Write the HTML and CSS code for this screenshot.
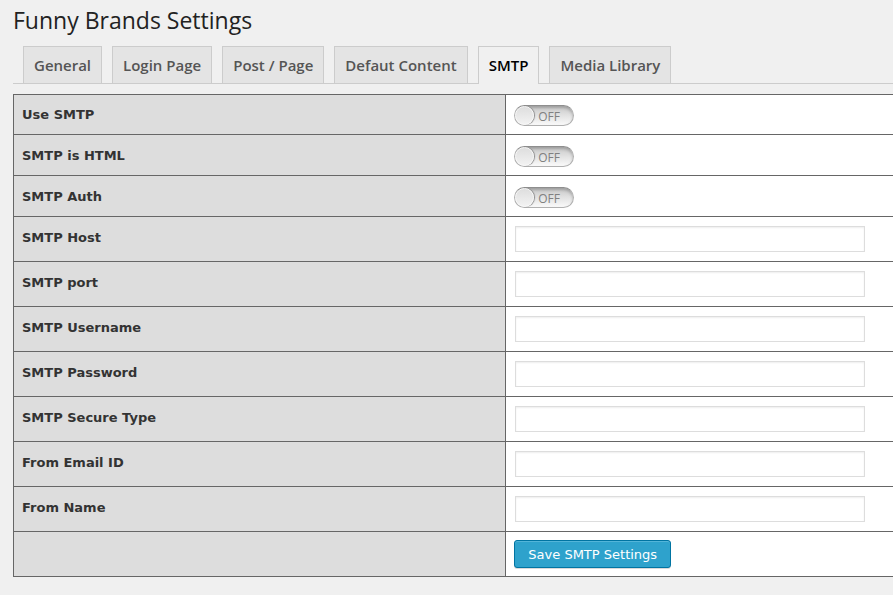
FILE: index.html
```html
<!DOCTYPE html>
<html lang="en">
<head>
<meta charset="utf-8">
<meta name="viewport" content="width=device-width, initial-scale=1">
<title>Funny Brands Settings</title>
<link rel="stylesheet" href="styles.css">
</head>
<body>
<main class="wrap">
  <h1 class="title">Funny Brands Settings</h1>
  <nav class="tabs">
    <a class="tab" href="#general">General</a>
    <a class="tab" href="#login">Login Page</a>
    <a class="tab" href="#post">Post / Page</a>
    <a class="tab" href="#content">Defaut Content</a>
    <a class="tab tab-active" href="#smtp" aria-current="page">SMTP</a>
    <a class="tab" href="#media">Media Library</a>
  </nav>
  <form class="settings">
    <table class="form-table">
      <tbody>
        <tr class="switch-row">
          <th scope="row"><label for="use-smtp">Use SMTP</label></th>
          <td><span class="switch"><input type="checkbox" id="use-smtp"><span class="switch-text">OFF</span></span></td>
        </tr>
        <tr class="switch-row">
          <th scope="row"><label for="is-html">SMTP is HTML</label></th>
          <td><span class="switch"><input type="checkbox" id="is-html"><span class="switch-text">OFF</span></span></td>
        </tr>
        <tr class="switch-row">
          <th scope="row"><label for="auth">SMTP Auth</label></th>
          <td><span class="switch"><input type="checkbox" id="auth"><span class="switch-text">OFF</span></span></td>
        </tr>
        <tr>
          <th scope="row"><label for="host">SMTP Host</label></th>
          <td><input class="field" type="text" id="host"></td>
        </tr>
        <tr>
          <th scope="row"><label for="port">SMTP port</label></th>
          <td><input class="field" type="text" id="port"></td>
        </tr>
        <tr>
          <th scope="row"><label for="username">SMTP Username</label></th>
          <td><input class="field" type="text" id="username"></td>
        </tr>
        <tr>
          <th scope="row"><label for="password">SMTP Password</label></th>
          <td><input class="field" type="password" id="password"></td>
        </tr>
        <tr>
          <th scope="row"><label for="secure">SMTP Secure Type</label></th>
          <td><input class="field" type="text" id="secure"></td>
        </tr>
        <tr>
          <th scope="row"><label for="email">From Email ID</label></th>
          <td><input class="field" type="text" id="email"></td>
        </tr>
        <tr>
          <th scope="row"><label for="name">From Name</label></th>
          <td><input class="field" type="text" id="name"></td>
        </tr>
        <tr>
          <th></th>
          <td><button class="save" type="button">Save SMTP Settings</button></td>
        </tr>
      </tbody>
    </table>
  </form>
</main>
</body>
</html>
```
FILE: styles.css
```css
*,
*::before {
  box-sizing: border-box;
}

body {
  margin: 0;
  background: #f0f0f0;
  color: #333;
  font: 13px/18px "DejaVu Sans", Verdana, sans-serif;
}

.wrap {
  padding: 5px 0 18px 13px;
}

.title {
  margin: 0;
  color: #222;
  font: 400 23px/30px "Open Sans", sans-serif;
}

.tabs {
  display: flex;
  gap: 10px;
  margin-top: 11px;
  padding-left: 10px;
  border-bottom: 1px solid #ccc;
}

.tab {
  padding: 6px 10px;
  border: 1px solid #ccc;
  border-bottom: 0;
  background: #e4e4e4;
  color: #555;
  font: 600 15px/24px "Open Sans", sans-serif;
  text-decoration: none;
  white-space: nowrap;
}

.tab-active {
  margin-bottom: -1px;
  background: #f0f0f0;
  color: #000;
}

.settings {
  margin-top: 10px;
}

.form-table {
  width: 100%;
  border-spacing: 0;
  border-top: 1px solid #666;
  border-left: 1px solid #666;
  background: #fff;
  table-layout: fixed;
}

.form-table th,
.form-table td {
  height: 45px;
  padding: 8px;
  border-bottom: 1px solid #666;
  text-align: left;
}

.form-table th {
  width: 56%;
  padding-top: 12px;
  border-right: 1px solid #666;
  background: #ddd;
  font-weight: 700;
  vertical-align: top;
}

.form-table .switch-row th,
.form-table .switch-row td {
  height: 41px;
}

.form-table .switch-row td {
  padding: 11px 8px 8px;
}

.form-table .switch-row:first-child th,
.form-table .switch-row:first-child td {
  height: 40px;
}

.form-table .switch-row:first-child th {
  padding-top: 11px;
}

.form-table .switch-row:first-child td {
  padding-top: 10px;
}

.switch {
  display: grid;
  width: 60px;
  height: 21px;
}

.switch input,
.switch-text {
  grid-area: 1 / 1;
}

.switch input {
  width: 60px;
  height: 21px;
  margin: 0;
  border: 1px solid #b0b0b0;
  border-top-color: #8e8e8e;
  border-radius: 11px;
  appearance: none;
  background: linear-gradient(#c8c8c8, #e2e2e2 50%, #fafafa);
  box-shadow: inset 0 2px 3px rgba(0, 0, 0, 0.22);
}

.switch input::before {
  content: "";
  display: block;
  width: 19px;
  height: 19px;
  border: 1px solid #f8f8f8;
  border-radius: 50%;
  background: linear-gradient(#dedede, #f2f2f2);
  box-shadow: 1px 0 1px #888;
}

.switch input:checked::before {
  margin-left: auto;
}

.switch-text {
  padding-left: 24px;
  color: #808080;
  font: 400 12px/23px "Open Sans", sans-serif;
  pointer-events: none;
}

.field {
  display: block;
  width: 350px;
  max-width: 100%;
  height: 26px;
  margin: 0 1px;
  padding: 3px 5px;
  border: 1px solid #ddd;
  background: #fff;
  box-shadow: inset 0 1px 2px rgba(0, 0, 0, 0.07);
  color: #333;
  font: inherit;
}

.save {
  display: block;
  min-width: 157px;
  height: 28px;
  padding: 2px 10px 0;
  border: 1px solid #0074a2;
  border-radius: 3px;
  background: #2ea2cc;
  box-shadow: inset 0 1px 0 rgba(120, 200, 230, 0.5), 0 1px 0 rgba(0, 0, 0, 0.15);
  color: #fff;
  font: 13px/24px "DejaVu Sans", Verdana, sans-serif;
}
```
